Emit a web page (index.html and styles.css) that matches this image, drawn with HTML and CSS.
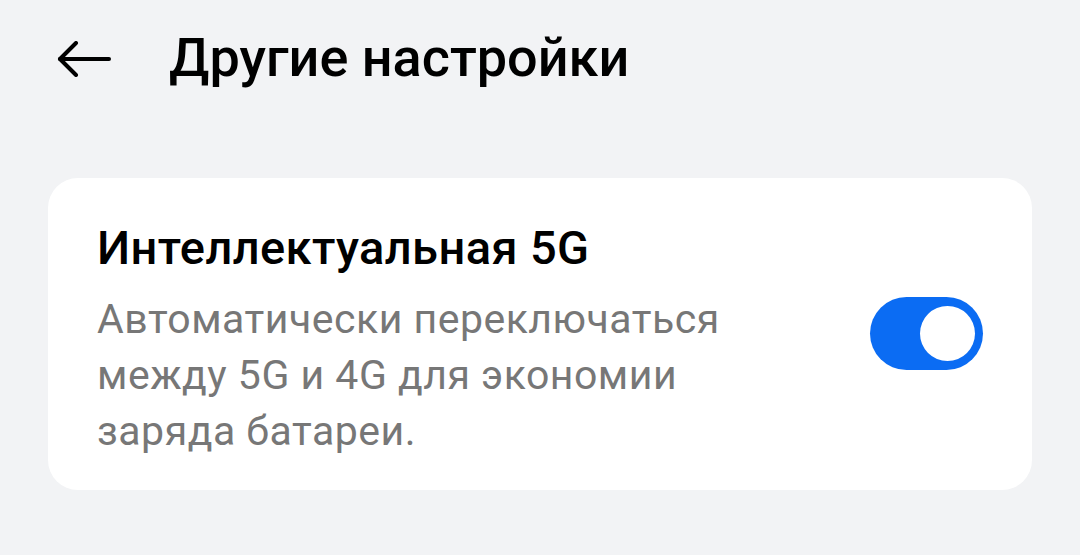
FILE: index.html
```html
<!DOCTYPE html>
<html lang="ru">
<head>
  <meta charset="UTF-8">
  <meta name="viewport" content="width=device-width, initial-scale=1.0">
  <title>Другие настройки</title>
  <link rel="stylesheet" href="styles.css">
</head>
<body>
  <header class="topbar">
    <button class="back" aria-label="Назад">
      <svg width="56" height="36" viewBox="0 0 56 36" fill="none" stroke="#000" stroke-width="4" stroke-linecap="round" stroke-linejoin="round">
        <path d="M4 18 H53"/>
        <path d="M20 2 L4 18 L20 34"/>
      </svg>
    </button>
    <h1>Другие настройки</h1>
  </header>

  <section class="card">
    <div class="item">
      <div class="item-text">
        <h2>Интеллектуальная 5G</h2>
        <p>Автоматически переключаться между 5G и 4G для экономии заряда батареи.</p>
      </div>
      <div class="switch on"><span class="knob"></span></div>
    </div>
  </section>
</body>
</html>
```

FILE: styles.css
```css
* {
  margin: 0;
  padding: 0;
  box-sizing: border-box;
  font-family: Roboto, 'Noto Sans', sans-serif;
}

body {
  background-color: #f2f3f5;
  color: #000;
  width: 1080px;
  height: 555px;
  overflow: hidden;
}

.topbar {
  display: flex;
  align-items: center;
  height: 115px;
  padding-left: 56px;
}

.back {
  background: none;
  border: none;
  width: 56px;
  height: 36px;
  display: flex;
  align-items: center;
  margin-right: 57px;
  margin-top: 3px;
}

.topbar h1 {
  font-size: 54px;
  font-weight: 500;
  line-height: 64px;
}

.card {
  margin: 63px 48px 0 48px;
  background: #fff;
  border-radius: 30px;
  padding: 42px 49px 31px 49px;
}

.item {
  display: flex;
  align-items: center;
  justify-content: space-between;
}

.item-text {
  max-width: 690px;
}

.item-text h2 {
  font-size: 47px;
  font-weight: 500;
  letter-spacing: 0.4px;
  line-height: 56px;
  margin-bottom: 15px;
}

.item-text p {
  font-size: 41px;
  letter-spacing: 0.5px;
  color: #777;
  line-height: 56px;
}

.switch {
  width: 113px;
  height: 73px;
  border-radius: 37px;
  background: #0b6cf3;
  display: flex;
  align-items: center;
  justify-content: flex-end;
  padding-right: 8px;
  margin-bottom: 12px;
}

.knob {
  width: 55px;
  height: 55px;
  border-radius: 50%;
  background: #fff;
}
```
